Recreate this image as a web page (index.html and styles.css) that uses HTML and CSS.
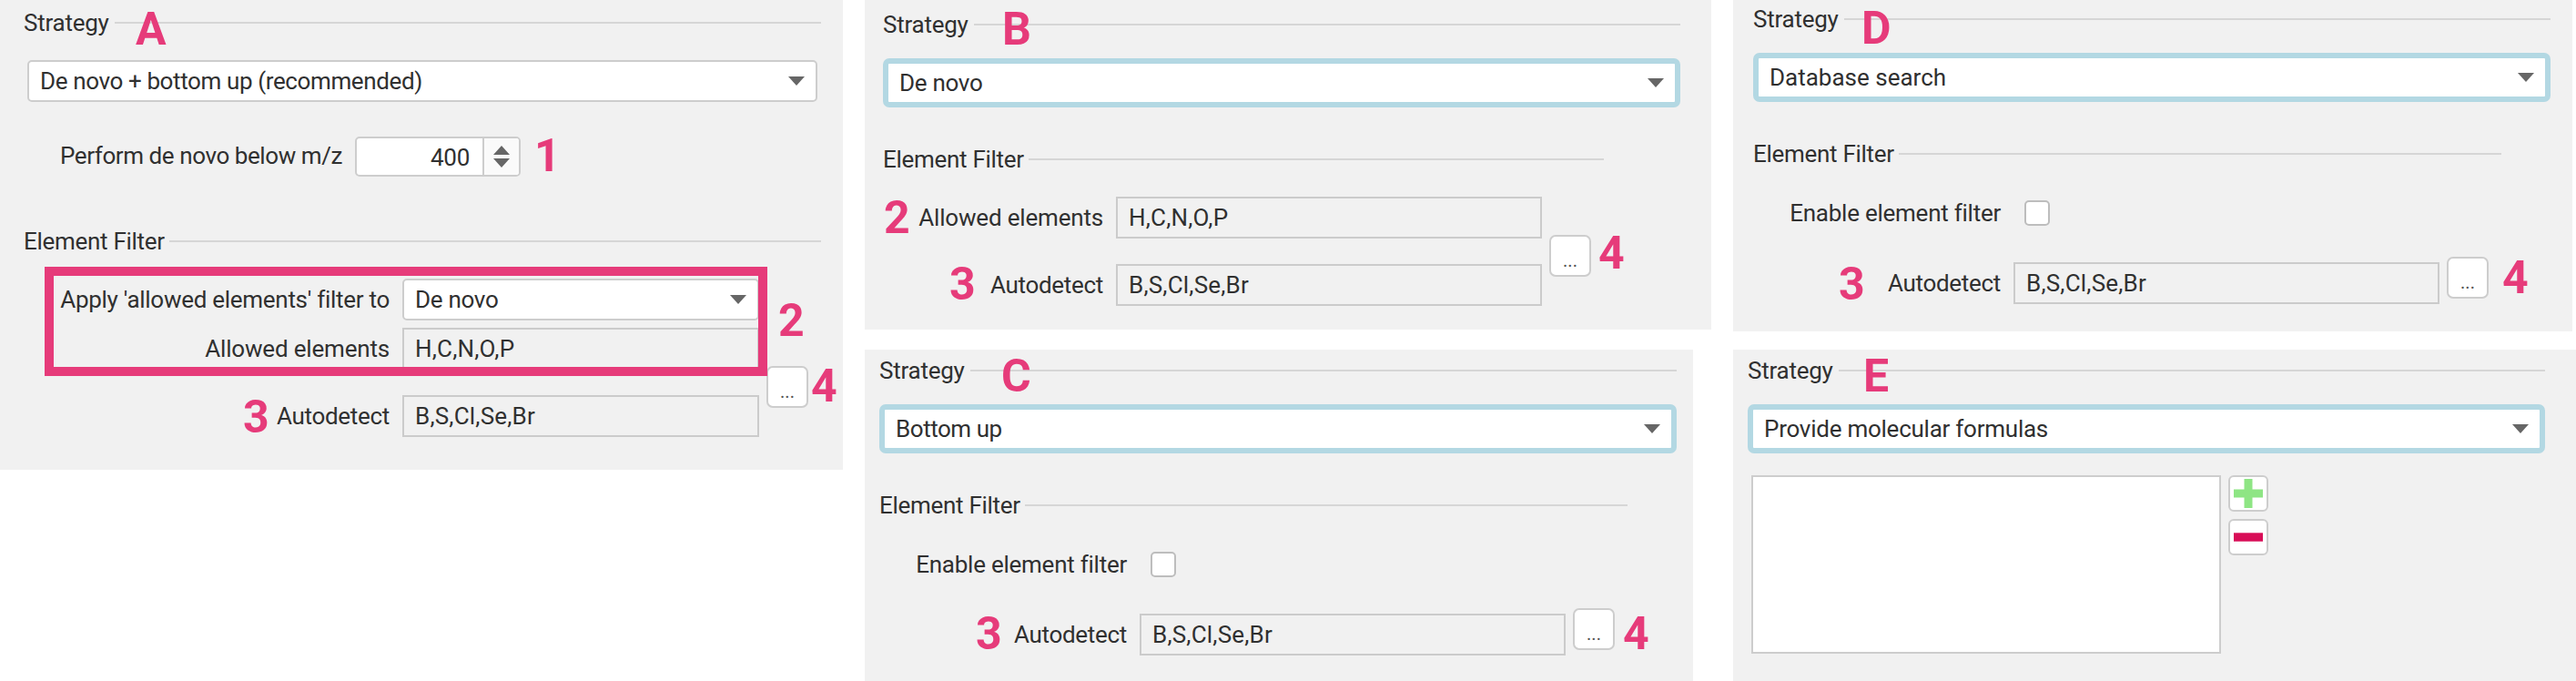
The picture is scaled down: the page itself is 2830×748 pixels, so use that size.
FILE: index.html
```html
<!DOCTYPE html>
<html lang="en">
<head>
<meta charset="utf-8">
<title>Strategy</title>
<link rel="stylesheet" href="styles.css">
</head>
<body>
<main class="board">
  <div class="column column-a">
    <section class="panel panel-a">
      <h2 class="heading"><span class="t-strategy">Strategy</span></h2>
      <div class="combo combo-main"><span class="t-combo-a">De novo + bottom up (recommended)</span><svg class="caret" viewBox="0 0 18 10"><path d="M0 0H18L9 10Z"/></svg></div>
      <div class="row spin-row">
        <span class="label t-perform">Perform de novo below m/z</span>
        <div class="spin"><span class="spin-value">400</span><span class="spin-buttons"><svg viewBox="0 0 18 24"><path d="M0 10H18L9 0ZM0 14H18L9 24Z"/></svg></span></div>
      </div>
      <h2 class="heading"><span class="t-element">Element Filter</span></h2>
      <div class="filter">
        <div class="fields">
          <div class="row"><span class="label t-apply">Apply 'allowed elements' filter to</span><div class="combo combo-small"><span class="t-novo">De novo</span><svg class="caret" viewBox="0 0 18 10"><path d="M0 0H18L9 10Z"/></svg></div></div>
          <div class="row row-allowed"><span class="label t-allowed">Allowed elements</span><div class="field t-hcnop">H,C,N,O,P</div></div>
          <div class="row row-auto"><span class="label t-auto">Autodetect</span><div class="field t-bscl">B,S,Cl,Se,Br</div></div>
        </div>
        <button class="more">...</button>
      </div>
      <div class="frame"></div>
      <b class="mark a-a">A</b><b class="mark a-1">1</b><b class="mark a-2">2</b><b class="mark a-3">3</b><b class="mark a-4">4</b>
    </section>
  </div>

  <div class="column column-b">
    <section class="panel panel-b">
      <h2 class="heading"><span class="t-strategy">Strategy</span></h2>
      <div class="combo focus"><span class="t-novo">De novo</span><svg class="caret" viewBox="0 0 18 10"><path d="M0 0H18L9 10Z"/></svg></div>
      <h2 class="heading heading-filter"><span class="t-element">Element Filter</span></h2>
      <div class="filter">
        <div class="fields">
          <div class="row"><span class="label t-allowed">Allowed elements</span><div class="field t-hcnop">H,C,N,O,P</div></div>
          <div class="row row-auto"><span class="label t-auto">Autodetect</span><div class="field t-bscl">B,S,Cl,Se,Br</div></div>
        </div>
        <button class="more">...</button>
      </div>
      <b class="mark b-b">B</b><b class="mark b-2">2</b><b class="mark b-3">3</b><b class="mark b-4">4</b>
    </section>
    <section class="panel panel-c">
      <h2 class="heading"><span class="t-strategy">Strategy</span></h2>
      <div class="combo focus"><span class="t-bottom">Bottom up</span><svg class="caret" viewBox="0 0 18 10"><path d="M0 0H18L9 10Z"/></svg></div>
      <h2 class="heading heading-filter"><span class="t-element">Element Filter</span></h2>
      <div class="row enable"><span class="label t-enable">Enable element filter</span><span class="check"></span></div>
      <div class="filter">
        <div class="row"><span class="label t-auto">Autodetect</span><div class="field t-bscl">B,S,Cl,Se,Br</div></div>
        <button class="more">...</button>
      </div>
      <b class="mark c-c">C</b><b class="mark c-3">3</b><b class="mark c-4">4</b>
    </section>
  </div>

  <div class="column column-d">
    <section class="panel panel-d">
      <h2 class="heading"><span class="t-strategy">Strategy</span></h2>
      <div class="combo focus"><span class="t-database">Database search</span><svg class="caret" viewBox="0 0 18 10"><path d="M0 0H18L9 10Z"/></svg></div>
      <h2 class="heading heading-filter"><span class="t-element">Element Filter</span></h2>
      <div class="row enable"><span class="label t-enable">Enable element filter</span><span class="check"></span></div>
      <div class="filter">
        <div class="row"><span class="label t-auto">Autodetect</span><div class="field t-bscl">B,S,Cl,Se,Br</div></div>
        <button class="more">...</button>
      </div>
      <b class="mark d-d">D</b><b class="mark d-3">3</b><b class="mark d-4">4</b>
    </section>
    <section class="panel panel-e">
      <h2 class="heading"><span class="t-strategy">Strategy</span></h2>
      <div class="combo focus"><span class="t-provide">Provide molecular formulas</span><svg class="caret" viewBox="0 0 18 10"><path d="M0 0H18L9 10Z"/></svg></div>
      <div class="formulas">
        <div class="list"></div>
        <div class="tools">
          <button class="tool"><svg viewBox="0 0 32 32"><path fill="#8ee584" d="M11.500 0h9v11.500H32v9H20.500V32h-9V20.500H0v-9h11.500Z"/></svg></button>
          <button class="tool"><svg viewBox="0 0 32 32"><path fill="#d80d57" d="M0 11.300H32V20.700H0Z"/></svg></button>
        </div>
      </div>
      <b class="mark e-e">E</b>
    </section>
  </div>
</main>
</body>
</html>
```
FILE: styles.css
```css
* { box-sizing: border-box; }
body {
  margin: 0;
  background: #fff;
  color: #303030;
  font: 26px/30px Roboto, "Liberation Sans", sans-serif;
  letter-spacing: -0.3px;
}
.board { display: flex; gap: 24px; width: 2830px; height: 748px; overflow: hidden; }
.column { display: flex; flex-direction: column; flex: none; }
.column-a { width: 926px; }
.column-b { width: 930px; gap: 22px; }
.column-d { width: 926px; gap: 20px; }
.panel { position: relative; background: #f1f1f1; white-space: nowrap; }
.panel-a { height: 516px; padding: 10px 24px 0 26px; }
.panel-b { height: 362px; padding: 12px 34px 0 20px; }
.panel-c { width: 910px; height: 364px; padding: 8px 18px 0 16px; }
.panel-d { width: 922px; height: 364px; padding: 6px 24px 0 22px; }
.panel-e { height: 364px; padding: 8px 34px 0 16px; }

/* Section title followed by a rule */
.heading { display: flex; align-items: center; margin: 0; height: 30px; font: inherit; }
.heading::after { content: ""; flex: 1; height: 2px; background: #d6d6d6; }
.heading .t-strategy { width: 100px; }
.heading .t-element { width: 160px; }
.panel-b .heading-filter { margin-right: 84px; }
.panel-c .heading-filter, .panel-d .heading-filter { margin-right: 54px; }
.heading-filter { margin-top: 42px; }

/* Tracking per caption */
.t-strategy, .t-enable, .t-provide { letter-spacing: -0.25px; }
.t-combo-a { letter-spacing: -0.38px; }
.t-perform { letter-spacing: -0.42px; }
.t-apply { letter-spacing: -0.28px; }
.t-allowed { letter-spacing: -0.18px; }
.t-hcnop, .t-bscl { letter-spacing: 0.2px; }
.t-bottom { letter-spacing: -0.45px; }
.t-database { letter-spacing: 0; }

/* Inputs */
.combo {
  display: flex; align-items: center; justify-content: space-between;
  height: 46px; padding: 0 12px; background: #fff;
  border: 2px solid #cdcdcd; border-radius: 5px;
}
.combo-main { margin: 26px 4px 0; }
.combo-small { width: 392px; }
.focus { height: 54px; margin-top: 22px; padding: 0 12px; border: 6px solid #b3d8e3; border-radius: 7px; }
.caret { width: 18px; height: 10px; fill: #666; }
.field { width: 468px; height: 46px; padding: 6px 12px; border: 2px solid #cbcbcb; }
.panel-a .field { width: 392px; }
.row { display: flex; align-items: center; }
.label { text-align: right; }
.check { width: 28px; height: 28px; background: #fff; border: 2px solid #bdbdbd; border-radius: 5px; }
.filter { display: flex; gap: 8px; }
.more {
  flex: none; width: 46px; height: 46px; padding: 10px 0 0; background: #fff;
  border: 2px solid #cdcdcd; border-radius: 7px;
  color: #555; font: 20px/24px Roboto, sans-serif; letter-spacing: 0; text-align: center;
}

/* Panel A */
.spin-row { height: 44px; margin: 38px 0 56px; }
.spin-row .label { width: 350px; margin: 0 14px 2px 0; }
.spin { display: flex; width: 182px; height: 44px; background: #fff; border: 2px solid #cdcdcd; border-radius: 5px; overflow: hidden; }
.spin-value { width: 138px; padding: 6px 14px 0 0; text-align: right; }
.spin-buttons { flex: 1; background: #fafafa; border-left: 2px solid #cdcdcd; display: flex; align-items: center; justify-content: center; }
.spin-buttons svg { width: 18px; height: 24px; fill: #666; }
.panel-a .filter { margin-top: 26px; }
.panel-a .fields .label { width: 402px; margin-right: 14px; }
.row-allowed { margin-top: 8px; }
.row-auto { margin-top: 28px; }
.panel-a .more { margin-top: 96px; }
.frame { position: absolute; left: 49px; top: 293px; width: 794px; height: 120px; border: 10px solid #e63b7a; }

/* Panel B */
.panel-b .filter { margin-top: 26px; }
.panel-b .label { width: 242px; margin-right: 14px; }
.panel-b .more { margin-top: 42px; }

/* Panels C and D */
.enable { height: 28px; margin-top: 36px; }
.enable .label { width: 272px; margin-right: 26px; }
.panel-c .filter { margin-top: 34px; }
.panel-d .filter { margin-top: 34px; }
.filter > .row { margin-top: 6px; }
.filter > .row .label { width: 272px; margin-right: 14px; }

/* Panel E */
.formulas { display: flex; gap: 8px; margin: 24px 0 0 4px; }
.list { width: 516px; height: 196px; background: #fff; border: 2px solid #cdcdcd; }
.tools { display: flex; flex-direction: column; gap: 8px; }
.tool { display: flex; align-items: center; justify-content: center; width: 44px; height: 40px; padding: 0; background: #fff; border: 2px solid #cdcdcd; border-radius: 6px; }
.tool svg { width: 32px; height: 32px; }

/* Callouts laid over the panels */
.mark { position: absolute; color: #e63b7a; font: 700 50px/50px Roboto, "Liberation Sans", sans-serif; letter-spacing: 0; }
.a-a { left: 149px; top: 7px; }
.a-1 { left: 587px; top: 146px; }
.a-2 { left: 855px; top: 327px; }
.a-3 { left: 267px; top: 433px; }
.a-4 { left: 891px; top: 399px; }
.b-b { left: 151px; top: 7px; }
.b-2 { left: 21px; top: 214px; }
.b-3 { left: 93px; top: 287px; }
.b-4 { left: 806px; top: 253px; }
.c-c { left: 150px; top: 4px; }
.c-3 { left: 122px; top: 287px; }
.c-4 { left: 833px; top: 287px; }
.d-d { left: 141px; top: 6px; }
.d-3 { left: 116px; top: 287px; }
.d-4 { left: 845px; top: 280px; }
.e-e { left: 143px; top: 4px; }
```
